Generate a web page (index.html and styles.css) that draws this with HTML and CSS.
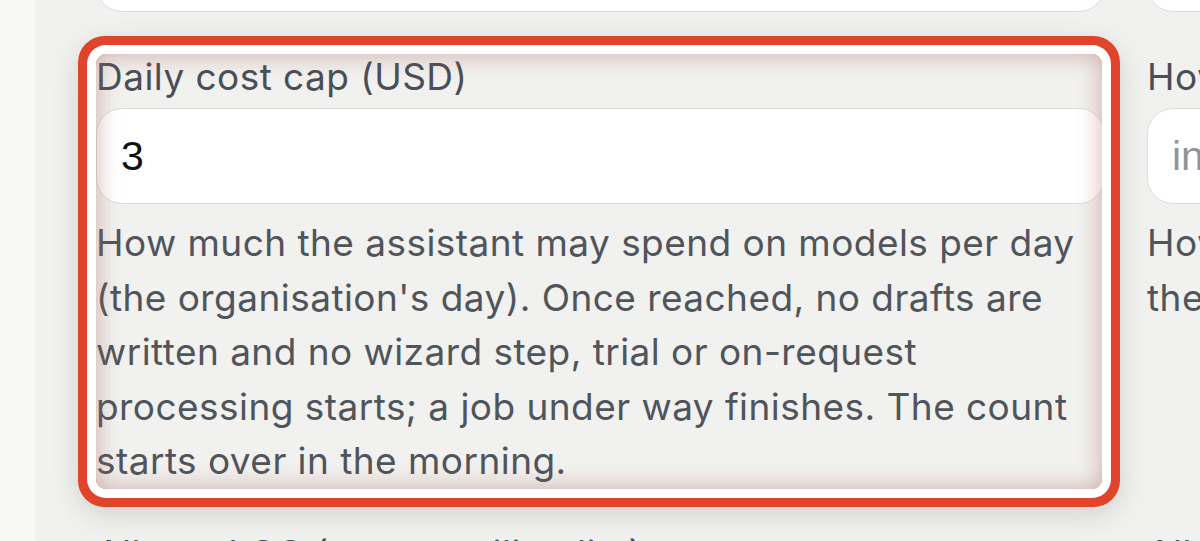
FILE: index.html
```html
<!DOCTYPE html>
<html lang="en">
<head>
<meta charset="utf-8">
<title>Settings</title>
<link rel="stylesheet" href="styles.css">
</head>
<body>
<div class="rail"></div>
<main class="main">
  <div class="grid">
    <div class="field field-top">
      <input class="input" type="text" value="">
    </div>
    <div class="field field-top">
      <input class="input" type="text" value="">
    </div>

    <div class="field highlighted">
      <label class="label" for="cap">Daily cost cap (USD)</label>
      <input class="input" id="cap" type="text" value="3">
      <p class="help">How much the assistant may spend on models per day (the organisation's day). Once reached, no drafts are written and no wizard step, trial or on-request processing starts; a job under way finishes. The count starts over in the morning.</p>
    </div>
    <div class="field">
      <label class="label" for="wait">How long a job may run (minutes)</label>
      <input class="input" id="wait" type="text" placeholder="in minutes">
      <p class="help">How long the assistant may spend on models per job; the timer starts again with each request.</p>
    </div>

    <div class="field">
      <label class="label">Allowed CC (e.g. a mailing list)</label>
    </div>
    <div class="field">
      <label class="label">Allowed senders</label>
    </div>
  </div>
</main>
</body>
</html>
```

FILE: styles.css
```css
html, body {
  margin: 0;
  height: 100%;
}

body {
  background: #f8f8f7;
  display: flex;
  overflow: hidden;
  font-family: Inter, "Noto Sans", sans-serif;
}

.rail {
  width: 35px;
  flex: none;
}

.main {
  flex: 1;
  background: #f1f1ef;
  padding-left: 61px;
  overflow: hidden;
}

.grid {
  display: grid;
  grid-template-columns: 1009px 1009px;
  column-gap: 42px;
  row-gap: 37px;
  margin-top: -84px;
}

.field {
  display: flex;
  flex-direction: column;
  position: relative;
}

.label {
  font-size: 37px;
  line-height: 55px;
  letter-spacing: 0.45px;
  color: #4a4e56;
  margin-bottom: 4px;
  white-space: nowrap;
}

.input {
  box-sizing: border-box;
  height: 96px;
  border: 1.5px solid #dcdcda;
  border-radius: 26px;
  background: #ffffff;
  padding: 0 24px;
  font-family: "Liberation Sans", Arial, sans-serif;
  font-size: 41px;
  color: #111111;
  outline: none;
  width: 100%;
}

.input::placeholder {
  color: #8f949c;
}

.help {
  margin: 12px 0 0;
  font-size: 37px;
  line-height: 54.6px;
  letter-spacing: 0.45px;
  color: #50545b;
}

.highlighted::after {
  content: "";
  position: absolute;
  top: 5px;
  left: 0;
  right: 3px;
  bottom: 0;
  border-radius: 10px;
  pointer-events: none;
  box-shadow:
    inset 0 0 22px 2px rgba(170, 105, 95, 0.45),
    0 0 0 9px #ffffff,
    0 0 0 18px #e0452b,
    0 8px 30px 18px rgba(0, 0, 0, 0.13);
}
```
